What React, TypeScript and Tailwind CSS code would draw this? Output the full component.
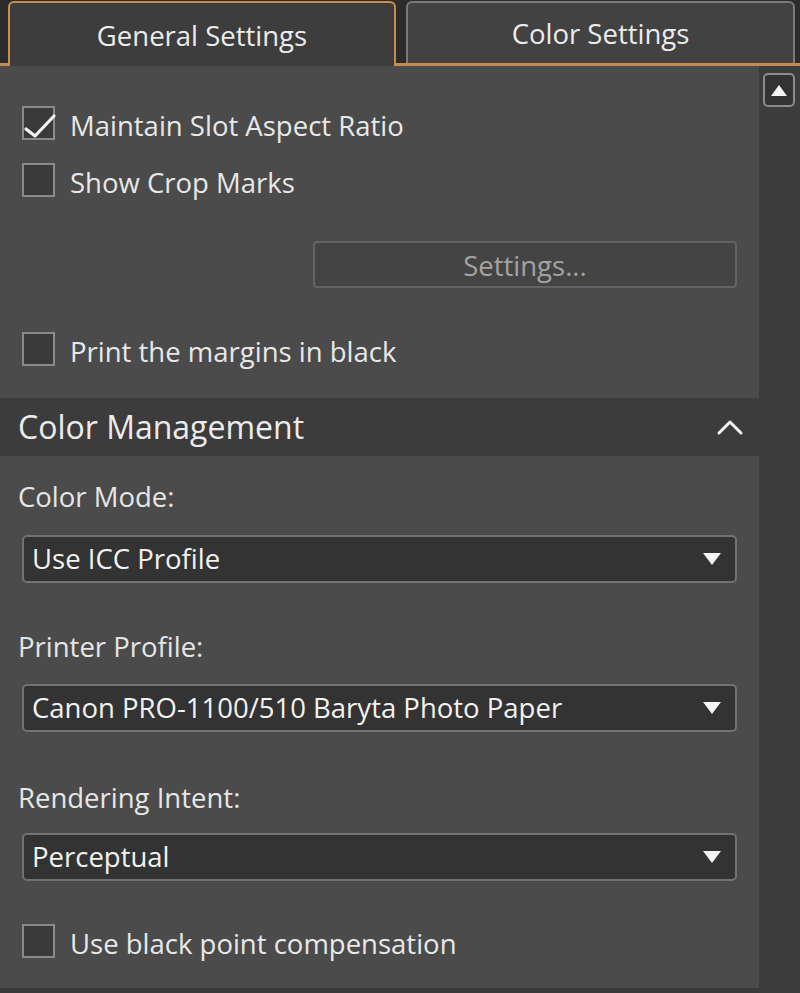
import { useState } from "react";

const FONT = { fontFamily: '"Open Sans", "Noto Sans", "Liberation Sans", sans-serif' };

function CheckBox({ checked, label, onChange }: { checked: boolean; label: string; onChange: () => void }) {
  return (
    <button className="flex h-[34px] items-center gap-[15px] pl-[22px] text-left" onClick={onChange}>
      <span className="relative h-[34px] w-[33px] shrink-0 border-2 border-[#8a8a8a] bg-[#3a3a3a]">
        {checked && (
          <svg className="absolute left-[-1px] top-[1px]" width="36" height="30" viewBox="0 0 36 30" fill="none">
            <path d="M3 20 L12 27 L31 7" stroke="#f4f4f4" strokeWidth="3.2" strokeLinecap="round" strokeLinejoin="round" />
          </svg>
        )}
      </span>
      <span className="pt-[6px] text-[27.5px] font-medium leading-none text-[#e8e8e8]">{label}</span>
    </button>
  );
}

function Dropdown({ value }: { value: string }) {
  return (
    <div className="mx-[22px] flex h-[48px] w-[715px] items-center justify-between rounded-[5px] border-2 border-[#727272] bg-[#333333] pl-[8px] pr-[13px]">
      <span className="text-[27.5px] font-medium leading-none text-[#f2f2f2]">{value}</span>
      <svg width="20" height="14" viewBox="0 0 20 14">
        <path d="M1 1 H19 L10 13 Z" fill="#f4f4f4" />
      </svg>
    </div>
  );
}

function Label({ children }: { children: React.ReactNode }) {
  return <div className="flex h-[30px] items-center pl-[18px] text-[27.5px] font-medium leading-none text-[#e6e6e6]">{children}</div>;
}

export default function App() {
  const [tab, setTab] = useState("general");
  const [opts, setOpts] = useState({ aspect: true, crop: false, margins: false, bpc: false });
  const toggle = (k: keyof typeof opts) => () => setOpts((o) => ({ ...o, [k]: !o[k] }));

  return (
    <div className="flex h-[993px] w-[800px] flex-col overflow-hidden bg-[#2c2c2c]" style={FONT}>
      {/* tabs */}
      <div className="flex h-[66px] shrink-0">
        <div className="w-[8px] border-b-[3px] border-[#c98c4e]" />
        <button
          onClick={() => setTab("general")}
          className={`mt-[1px] flex w-[388px] items-center justify-center rounded-t-[6px] border-x-2 border-t-2 pt-[2px] text-[27.5px] font-medium text-[#ececec] ${tab === "general" ? "border-[#c98c4e] bg-[#3d3d3d]" : "border-[#7a7a7a] bg-[#424242]"}`}
        >
          General Settings
        </button>
        <div className="w-[10px] border-b-[3px] border-[#c98c4e]" />
        <div className="flex flex-1 border-b-[3px] border-[#c98c4e] pr-[5px]">
          <button
            onClick={() => setTab("color")}
            className={`mt-[1px] flex flex-1 items-center justify-center rounded-t-[6px] border-x-2 border-t-2 pt-[2px] text-[27.5px] font-medium text-[#ececec] ${tab === "color" ? "border-[#c98c4e] bg-[#3d3d3d]" : "border-[#7a7a7a] bg-[#424242]"}`}
          >
            Color Settings
          </button>
        </div>
      </div>

      <div className="flex flex-1">
        <div className="flex w-[759px] flex-col">
          {/* general */}
          <div className="flex h-[332px] flex-col bg-[#4b4b4b] pt-[40px]">
            <CheckBox checked={opts.aspect} label="Maintain Slot Aspect Ratio" onChange={toggle("aspect")} />
            <div className="mt-[23px]">
              <CheckBox checked={opts.crop} label="Show Crop Marks" onChange={toggle("crop")} />
            </div>
            <button className="ml-[313px] mt-[44px] flex h-[47px] w-[424px] items-center justify-center rounded-[4px] border-2 border-[#636363] bg-[#444444] pt-[2px] text-[27.5px] font-medium text-[#a3a3a3]">
              Settings...
            </button>
            <div className="mt-[44px]">
              <CheckBox checked={opts.margins} label="Print the margins in black" onChange={toggle("margins")} />
            </div>
          </div>

          {/* color management header */}
          <div className="flex h-[58px] shrink-0 items-center justify-between bg-[#3c3c3c] pl-[18px] pr-[15px]">
            <span className="text-[32px] font-medium leading-none text-[#ececec]">Color Management</span>
            <svg width="28" height="20" viewBox="0 0 28 20" fill="none">
              <path d="M3 16 L14 5 L25 16" stroke="#f2f2f2" strokeWidth="3" strokeLinecap="round" strokeLinejoin="round" />
            </svg>
          </div>

          <div className="flex flex-1 flex-col bg-[#4b4b4b] pt-[26px]">
            <Label>Color Mode:</Label>
            <div className="mt-[23px]">
              <Dropdown value="Use ICC Profile" />
            </div>
            <div className="mt-[49px]">
              <Label>Printer Profile:</Label>
            </div>
            <div className="mt-[22px]">
              <Dropdown value="Canon PRO-1100/510 Baryta Photo Paper" />
            </div>
            <div className="mt-[51px]">
              <Label>Rendering Intent:</Label>
            </div>
            <div className="mt-[20px]">
              <Dropdown value="Perceptual" />
            </div>
            <div className="mt-[43px]">
              <CheckBox checked={opts.bpc} label="Use black point compensation" onChange={toggle("bpc")} />
            </div>
          </div>
          <div className="h-[5px] shrink-0 bg-[#3a3a3a]" />
        </div>

        {/* scrollbar */}
        <div className="flex-1 bg-[#3c3c3c] pl-[4px] pt-[7px]">
          <div className="flex h-[34px] w-[32px] items-center justify-center rounded-[5px] border-2 border-[#8c8c8c] bg-[#333333]">
            <svg width="18" height="13" viewBox="0 0 18 13">
              <path d="M9 1 L17 12 H1 Z" fill="#f6f6f6" />
            </svg>
          </div>
        </div>
      </div>
    </div>
  );
}
